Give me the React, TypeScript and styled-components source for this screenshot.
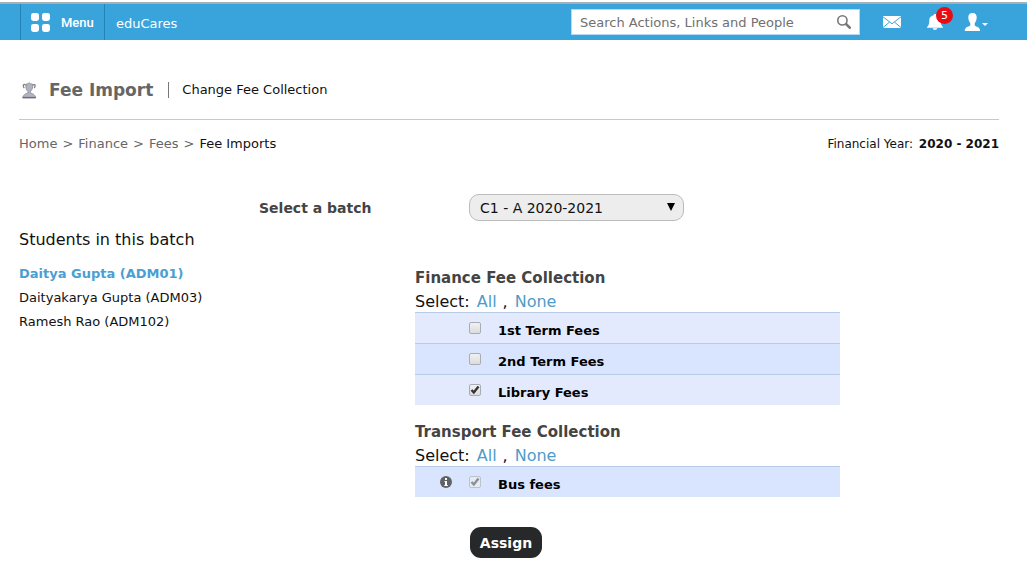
import React, { useState } from "react";
import styled, { createGlobalStyle } from "styled-components";

const GlobalStyle = createGlobalStyle`
  *, *::before, *::after { box-sizing: border-box; }
  body {
    margin: 0;
    background: #fff;
    color: #111;
    font-family: Verdana, "DejaVu Sans", sans-serif;
    font-size: 13px;
    line-height: 24px;
  }
  h1, h2, p, ul, ol { margin: 0; padding: 0; }
  ul, ol { list-style: none; }
  a { text-decoration: none; color: inherit; }
  button, input, select { font-family: inherit; }
`;

const TopBar = styled.header`
  display: flex;
  align-items: stretch;
  height: 38px;
  margin-top: 2px;
  padding-left: 20px;
  padding-right: 39px;
  border-top: 2px solid #a3b0b8;
  background: #39a4dc;
  color: #fff;
`;

const MenuButton = styled.button`
  display: flex;
  align-items: center;
  gap: 11px;
  width: 85px;
  padding: 0 0 0 10px;
  border: solid #2583b6;
  border-width: 0 1px;
  background: none;
  color: #fff;
  font: 500 13px Roboto, sans-serif;
`;

const Brand = styled.a`
  display: flex;
  align-items: center;
  padding: 4px 0 0 11px;
`;

const SearchBox = styled.form`
  display: flex;
  align-items: center;
  width: 289px;
  height: 26px;
  margin: 5px 23px 0 auto;
  padding: 0 8px;
  border: 1px solid #b5d9ee;
  background: #fff;
`;

const SearchInput = styled.input`
  flex: 1;
  min-width: 0;
  padding: 0;
  border: 0;
  outline: 0;
  background: none;
  font-size: 13px;
  color: #555;
  &::placeholder { color: #707070; opacity: 1; }
`;

const IconButton = styled.button<{ $gap?: number }>`
  position: relative;
  display: flex;
  align-items: center;
  padding: 0;
  border: 0;
  background: none;
  color: #fff;
  margin-right: ${(p) => p.$gap ?? 0}px;
`;

const Badge = styled.span`
  position: absolute;
  top: 3px;
  left: 9px;
  width: 17px;
  height: 17px;
  border-radius: 50%;
  background: #e80c14;
  font-size: 11px;
  line-height: 17px;
  text-align: center;
`;

const Page = styled.main`
  padding: 0 28px 28px 19px;
`;

const TitleBar = styled.div`
  display: flex;
  align-items: center;
  height: 80px;
  padding-top: 21px;
  border-bottom: 1px solid #c8c8c8;
`;

const PageTitle = styled.h1`
  margin-left: 12px;
  color: #666;
  font-size: 17px;
`;

const Divider = styled.span`
  width: 1px;
  height: 16px;
  margin: 0 13px 0 15px;
  background: #777;
`;

const SubHeader = styled.div`
  display: flex;
  justify-content: space-between;
  padding-top: 12px;
`;

const Crumbs = styled.ol`
  display: flex;
  color: #666;
`;

const Crumb = styled.li`
  & + &::before { content: ">"; margin: 0 5px; }
  &[aria-current] { color: #111; }
  &[aria-current]::before { color: #666; }
`;

const Year = styled.p`
  font-size: 12px;
  & b { margin-left: 2px; }
`;

const BatchRow = styled.div`
  display: flex;
  align-items: center;
  margin-top: 38px;
  padding-left: 240px;
`;

const BatchLabel = styled.label`
  width: 210px;
  color: #444;
  font-size: 14px;
  font-weight: bold;
`;

const SelectWrap = styled.div`
  position: relative;
  width: 215px;
`;

const BatchSelect = styled.select`
  appearance: none;
  display: block;
  width: 100%;
  height: 27px;
  padding: 1px 24px 0 10px;
  border: 1px solid #bbb;
  border-radius: 10px;
  background: #ededed;
  color: #111;
  font-size: 14px;
`;

const SelectArrow = styled.svg`
  position: absolute;
  top: 9px;
  right: 9px;
  pointer-events: none;
`;

const Columns = styled.div`
  display: grid;
  grid-template-columns: 396fr 425fr 159fr;
  padding-top: 7px;
`;

const StudentsTitle = styled.h2`
  margin-bottom: 10px;
  font-size: 16px;
  font-weight: normal;
`;

const Student = styled.a<{ $active?: boolean }>`
  color: ${(p) => (p.$active ? "#4a9fd2" : "#111")};
  font-weight: ${(p) => (p.$active ? "bold" : "normal")};
`;

const Collections = styled.form`
  padding-top: 38px;
`;

const Collection = styled.section`
  margin-bottom: 15px;
`;

const CollectionTitle = styled.h2`
  color: #444;
  font-size: 15px;
`;

const Picker = styled.p`
  display: flex;
  height: 22px;
  font-size: 16px;
`;

const PickerButton = styled.button`
  margin: 0 6px 0 7px;
  padding: 0;
  border: 0;
  background: none;
  color: #4f9cc9;
  font-size: 16px;
  line-height: 24px;
`;

const FeeTable = styled.table`
  width: 100%;
  border-collapse: separate;
  border-spacing: 0;
`;

const FeeRow = styled.tr<{ $dark: boolean }>`
  height: 31px;
  background: ${(p) => (p.$dark ? "#d9e5ff" : "#e3eafe")};
`;

const Cell = styled.td<{ $w?: number }>`
  width: ${(p) => (p.$w ? `${p.$w}px` : "auto")};
  padding: 0;
  border-top: 1px solid #b8cbe8;
`;

const InfoIcon = styled.svg`
  display: block;
  margin-left: 25px;
`;

const FeeLabel = styled.label`
  display: block;
  padding-top: 5px;
  color: #000;
  font-weight: bold;
`;

const CheckWrap = styled.span`
  display: grid;
  width: 12px;
  height: 12px;
  & > * { grid-area: 1 / 1; }
`;

const CheckInput = styled.input`
  appearance: none;
  width: 12px;
  height: 12px;
  margin: 0;
  border: 1px solid #a9adb3;
  border-radius: 2px;
  background: linear-gradient(#f1f1f1, #dcdcdc);
  &:disabled { border-color: #bcc3cf; background: #e6eaf2; }
`;

const CheckMark = styled.svg`
  pointer-events: none;
`;

const AssignButton = styled.button`
  display: block;
  width: 72px;
  height: 31px;
  margin: 30px 0 0 55px;
  padding: 0;
  border: 0;
  border-radius: 11px;
  background: #26282a;
  color: #fff;
  font-size: 14px;
  font-weight: bold;
`;

type Fee = { id: string; name: string; checked: boolean; locked?: boolean };

const students = ["Daitya Gupta (ADM01)", "Daityakarya Gupta (ADM03)", "Ramesh Rao (ADM102)"];

const financeFees: Fee[] = [
  { id: "term1", name: "1st Term Fees", checked: false },
  { id: "term2", name: "2nd Term Fees", checked: false },
  { id: "library", name: "Library Fees", checked: true },
];

const transportFees: Fee[] = [{ id: "bus", name: "Bus fees", checked: true, locked: true }];

function FeeCollection({ title, initial, startDark }: { title: string; initial: Fee[]; startDark?: boolean }) {
  const [fees, setFees] = useState(initial);
  const setAll = (checked: boolean) => setFees(fees.map((f) => (f.locked ? f : { ...f, checked })));
  const toggle = (id: string) => setFees(fees.map((f) => (f.id === id ? { ...f, checked: !f.checked } : f)));
  return (
    <Collection>
      <CollectionTitle>{title}</CollectionTitle>
      <Picker>
        Select:
        <PickerButton type="button" onClick={() => setAll(true)}>All</PickerButton>
        ,
        <PickerButton type="button" onClick={() => setAll(false)}>None</PickerButton>
      </Picker>
      <FeeTable>
        <tbody>
          {fees.map((fee, i) => (
            <FeeRow key={fee.id} $dark={(i % 2 === 1) !== !!startDark}>
              <Cell $w={54}>
                {fee.locked && (
                  <InfoIcon width="12" height="12" viewBox="0 0 12 12" aria-hidden="true">
                    <circle cx="6" cy="6" r="6" fill="#606266" />
                    <path d="M5 2h2v2H5zM4.500 5H7v4h.8v1H4.300V9H5V6h-.5z" fill="#fff" />
                  </InfoIcon>
                )}
              </Cell>
              <Cell $w={29}>
                <CheckWrap>
                  <CheckInput
                    type="checkbox"
                    id={fee.id}
                    checked={fee.checked}
                    disabled={fee.locked}
                    onChange={() => toggle(fee.id)}
                  />
                  {fee.checked && (
                    <CheckMark width="12" height="12" viewBox="0 0 12 12" aria-hidden="true">
                      <path d="M2.500 6 4.800 8.500 9.500 2.600" fill="none" stroke={fee.locked ? "#8b8f98" : "#333"} strokeWidth="2.4" />
                    </CheckMark>
                  )}
                </CheckWrap>
              </Cell>
              <Cell>
                <FeeLabel htmlFor={fee.id}>{fee.name}</FeeLabel>
              </Cell>
            </FeeRow>
          ))}
        </tbody>
      </FeeTable>
    </Collection>
  );
}

export default function App() {
  return (
    <>
      <GlobalStyle />
      <TopBar>
        <MenuButton type="button">
          <svg width="19" height="19" viewBox="0 0 19 19" fill="#fff" aria-hidden="true">
            <rect width="8" height="8" rx="2.4" />
            <rect x="11" width="8" height="8" rx="2.4" />
            <rect y="11" width="8" height="8" rx="2.4" />
            <rect x="11" y="11" width="8" height="8" rx="2.4" />
          </svg>
          Menu
        </MenuButton>
        <Brand href="#">eduCares</Brand>
        <SearchBox role="search">
          <SearchInput aria-label="Search" placeholder="Search Actions, Links and People" />
          <IconButton type="submit" aria-label="Search">
            <svg width="14" height="14" viewBox="0 0 14 14" fill="none" stroke="#777">
              <circle cx="5.4" cy="5.4" r="4.6" strokeWidth="1.6" />
              <path d="m9.200 9.200 3.500 3.500" strokeWidth="2.6" strokeLinecap="round" />
            </svg>
          </IconButton>
        </SearchBox>
        <IconButton type="button" aria-label="Messages" $gap={26}>
          <svg width="18" height="12" viewBox="0 0 18 12">
            <rect width="18" height="12" fill="#fff" />
            <path d="m0 .8 9 7 9-7M0 11.6 6.6 6M18 11.6 11.4 6" fill="none" stroke="#39a4dc" />
          </svg>
        </IconButton>
        <IconButton type="button" aria-label="Notifications" $gap={21}>
          <svg width="16" height="16" viewBox="0 0 16 16" fill="#fff">
            <path d="M8 0c.8 0 1.300.5 1.400 1.200C12.300 1.700 13.700 3.700 13.700 6.500c0 3.400.5 4.600 2.300 6.700v.5H0v-.5c1.800-2.100 2.300-3.300 2.300-6.700 0-2.800 1.400-4.800 4.300-5.300C6.700.5 7.200 0 8 0ZM5.600 14.300h4.800c-.3 1-1.200 1.600-2.400 1.600s-2.100-.6-2.400-1.600Z" />
          </svg>
          <Badge>5</Badge>
        </IconButton>
        <IconButton type="button" aria-label="Account">
          <svg width="24" height="18" viewBox="0 0 24 18" fill="#fff">
            <path d="M8.500 0c2.900 0 4.300 1.900 4.200 4.600-.1 2.500-.9 4.400-2 5.600v1.900c0 .7.400 1 1.500 1.400 2.600.9 3.700 1.500 3.900 4.500H.6c.2-3 1.500-3.700 4-4.500 1.200-.4 1.700-.7 1.700-1.400v-1.900c-1.100-1.200-1.900-3.100-2-5.600C4.200 1.900 5.600 0 8.500 0ZM18 10h6l-3 3Z" />
          </svg>
        </IconButton>
      </TopBar>
      <Page>
        <TitleBar>
          <svg width="18" height="17" viewBox="0 0 18 17" aria-hidden="true">
            <path d="M6.800 3.400C5.600 1.900 4.200 2.300 4.300 3.800c0 1 .5 1.700 1 2.200M13.600 3.400c1.600-1.500 2.900-.6 2.500.8-.2.900-.6 1.500-1.100 1.900" fill="none" stroke="#7d808a" strokeWidth="1.300" />
            <path d="M7.200 2 9 1.700 10.200.7l1.200 1 2 .3c.7 3.500 0 5.600-1.900 7.300v1.600c2.800.9 4.500 2.100 5 4.100v1H3.900v-1c.5-2 2.200-3.200 5-4.100V9.300C7 7.600 6.400 5.500 7.200 2Z" fill="#b1b4bf" stroke="#858894" strokeWidth=".8" />
            <path d="M3.500 15.500h13.400" stroke="#6b6e78" strokeWidth="1.200" />
          </svg>
          <PageTitle>Fee Import</PageTitle>
          <Divider />
          <a href="#">Change Fee Collection</a>
        </TitleBar>
        <SubHeader>
          <nav aria-label="Breadcrumb">
            <Crumbs>
              <Crumb><a href="#">Home</a></Crumb>
              <Crumb><a href="#">Finance</a></Crumb>
              <Crumb><a href="#">Fees</a></Crumb>
              <Crumb aria-current="page">Fee Imports</Crumb>
            </Crumbs>
          </nav>
          <Year>Financial Year: <b>2020 - 2021</b></Year>
        </SubHeader>
        <BatchRow>
          <BatchLabel htmlFor="batch">Select a batch</BatchLabel>
          <SelectWrap>
            <BatchSelect id="batch" defaultValue="c1a">
              <option value="c1a">C1 - A 2020-2021</option>
            </BatchSelect>
            <SelectArrow width="8" height="8" viewBox="0 0 8 8" aria-hidden="true">
              <path d="M0 0h8L4 8Z" fill="#000" />
            </SelectArrow>
          </SelectWrap>
        </BatchRow>
        <Columns>
          <section>
            <StudentsTitle>Students in this batch</StudentsTitle>
            <ul>
              {students.map((name, i) => (
                <li key={name}><Student href="#" $active={i === 0}>{name}</Student></li>
              ))}
            </ul>
          </section>
          <Collections>
            <FeeCollection title="Finance Fee Collection" initial={financeFees} />
            <FeeCollection title="Transport Fee Collection" initial={transportFees} startDark />
            <AssignButton type="button">Assign</AssignButton>
          </Collections>
        </Columns>
      </Page>
    </>
  );
}
